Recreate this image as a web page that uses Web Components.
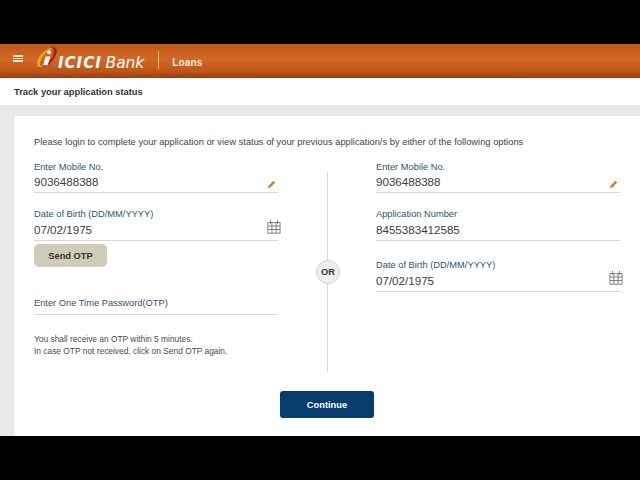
<!DOCTYPE html>
<html>
<head>
<meta charset="utf-8">
<title>Track your application status</title>
<style>
  html, body { margin: 0; padding: 0; background: #000; }
  body { width: 640px; height: 480px; overflow: hidden; font-family: "Liberation Sans", Arial, sans-serif; }
  bank-header { margin-top: 44px; }
  #page { background: #e9e9e9; padding-top: 11px; height: 331px; box-sizing: border-box; overflow: hidden; }
</style>
</head>
<body>
<template id="bank-header-tpl">
  <style>
    :host { display: flex; align-items: center; height: 34px; box-sizing: border-box; color: #fff;
      background: linear-gradient(#c4561c 0%, #cf6a25 45%, #bf5518 80%, #9c3c10 100%); }
    .menu { width: 10px; height: 3px; margin-left: 13px; margin-top: -6px; border-top: 2px solid #f3e3d3; border-bottom: 2px solid #f3e3d3; position: relative; }
    .menu::after { content: ""; position: absolute; left: 0; right: 0; top: 1px; height: 1px; background: #f3e3d3; }
    svg { margin-left: 13px; margin-top: -5px; flex: none; }
    .brand { font-family: "DejaVu Sans", sans-serif; font-size: 15.5px; font-style: italic; margin-left: -1px; white-space: nowrap; margin-top: 3px; letter-spacing: -0.1px; }
    .brand b { font-weight: 700; font-size: 15px; letter-spacing: 1px; margin-right: -1px; }
    .sep { width: 1px; height: 18px; background: #e9b88e; margin-left: 14px; margin-top: -2px; }
    .product { font-size: 10px; font-weight: 700; margin-left: 13px; margin-top: 3px; color: #f8ece0; letter-spacing: 0.2px; }
  </style>
  <div class="menu"></div>
  <svg width="23" height="26" viewBox="0 0 22 24">
    <path d="M14.500 1.500C8 3 1.500 10 1 16c-.3 3.500 2.500 4.500 5.500 3.200C3.500 19 3 16.500 4.500 13 6.300 8.800 10.500 4 15.500 2.200z" fill="#f4a21e"/>
    <path d="M14 1c4-1 6.500.5 6 4-.8 5.500-6 12.500-12 14.500l-1.500-.3c5-2.500 9.500-9 10.500-13.700.6-2.500-.5-4-3-4.500z" fill="#a8260f"/>
    <circle cx="12.500" cy="5.500" r="1.900" fill="#fff"/>
    <path d="M9.200 9.500h4.600l-2.800 8.500H7z" fill="#fff"/>
  </svg>
  <span class="brand"><b>ICICI</b> Bank</span>
  <span class="sep"></span>
  <span class="product"><slot></slot></span>
</template>

<template id="page-title-tpl">
  <style>
    :host { display: flex; align-items: center; height: 27px; padding-left: 14px; background: #fff;
      font-size: 9.300px; font-weight: 700; color: #333; }
  </style>
  <slot></slot>
</template>

<template id="form-field-tpl">
  <style>
    :host { display: block; border-bottom: 1px solid #d8d8d8; position: relative; margin-bottom: 15px; }
    :host([tall]) .value { margin-top: 2px; padding-bottom: 3px; }
    :host([empty]) .value { display: none; }
    :host([empty]) .label { padding-bottom: 5px; }
    .label { font-size: 9.300px; line-height: 12px; color: #2f5370; }
    .value { font-size: 11.600px; line-height: 15px; height: 15px; margin-top: 1px; padding-bottom: 3px; color: #3c3c3c; }
    ::slotted(svg) { position: absolute; }
  </style>
  <div class="label"></div>
  <div class="value"></div>
  <slot></slot>
</template>

<template id="or-divider-tpl">
  <style>
    :host { display: block; position: relative; width: 1px; height: 200px; margin: 11px 0 0 1px; background: #d9d9d9; }
    .badge { position: absolute; top: 88px; left: -11px; width: 24px; height: 24px; border-radius: 50%; box-sizing: border-box;
      background: #eee; border: 1px solid #d4d4d4; display: flex; align-items: center; justify-content: center;
      font-size: 9.300px; font-weight: 700; color: #333; }
  </style>
  <span class="badge">OR</span>
</template>

<template id="app-button-tpl">
  <style>
    :host { display: inline-flex; align-items: center; justify-content: center; box-sizing: border-box; font-size: 9.300px; font-weight: 700; }
    :host([variant="otp"]) { width: 73px; height: 23px; border-radius: 5px; background: #d0ccb8; color: #333; }
    :host([variant="primary"]) { width: 94px; height: 27px; border-radius: 3px; background: #063c70; color: #fff; }
  </style>
  <slot></slot>
</template>

<template id="login-card-tpl">
  <style>
    :host { display: block; margin-left: 14px; background: #fff; height: 320px; padding: 20px 0 0 19px; box-sizing: border-box; border-left: 1px solid #f4f4f4; }
    .intro { font-size: 9.300px; line-height: 12px; color: #444; margin-bottom: 13px; letter-spacing: 0.02px; white-space: nowrap; }
    .cols { display: grid; grid-template-columns: 244px 2px 244px; column-gap: 48px; height: 211px; }
    .foot { display: flex; justify-content: center; width: 586px; margin-top: 19px; }
  </style>
  <div class="intro"><slot name="intro"></slot></div>
  <div class="cols">
    <slot name="left"></slot>
    <or-divider></or-divider>
    <slot name="right"></slot>
  </div>
  <div class="foot"><slot name="action"></slot></div>
</template>

<template id="form-col-tpl">
  <style>
    :host { display: flex; flex-direction: column; align-items: stretch; }
    ::slotted(app-button) { align-self: flex-start; margin-top: -12px; margin-bottom: 30px; }
    ::slotted(p) { margin: 0; font-size: 8.400px; line-height: 11.500px; color: #4a4a4a; white-space: nowrap; }
  </style>
  <slot></slot>
</template>

<bank-header>Loans</bank-header>
<page-title>Track your application status</page-title>
<div id="page">
  <login-card>
    <span slot="intro">Please login to complete your application or view status of your previous application/s by either of the following options</span>
    <form-col slot="left">
      <form-field label="Enter Mobile No." value="9036488388"><svg width="9" height="9" viewBox="0 0 9 9" style="right:2px;bottom:3px"><path d="M1 8l.5-2.300L6.500.8 8.200 2.500 3.300 7.500z" fill="#d97a2a"/></svg></form-field>
      <form-field tall label="Date of Birth (DD/MM/YYYY)" value="07/02/1975"><svg width="14" height="15" viewBox="0 0 14 15" style="right:-3px;bottom:6px" fill="none" stroke="#666" stroke-width=".8"><path d="M.9 3.500h12.200v10.700H.9zM.9 7h12.200M.9 10.500h12.200M4.900 3.500v10.700M9.100 3.500v10.700M3.500 .8v4M10.500 .8v4"/></svg></form-field>
      <app-button variant="otp">Send OTP</app-button>
      <form-field empty label="Enter One Time Password(OTP)" style="margin-bottom:19px"></form-field>
      <p>You shall receive an OTP within 5 minutes.<br>In case OTP not received, click on Send OTP again.</p>
    </form-col>
    <form-col slot="right">
      <form-field label="Enter Mobile No." value="9036488388"><svg width="9" height="9" viewBox="0 0 9 9" style="right:2px;bottom:3px"><path d="M1 8l.5-2.300L6.500.8 8.200 2.500 3.300 7.500z" fill="#d97a2a"/></svg></form-field>
      <form-field tall label="Application Number" value="8455383412585" style="margin-bottom:18px"></form-field>
      <form-field tall label="Date of Birth (DD/MM/YYYY)" value="07/02/1975"><svg width="14" height="15" viewBox="0 0 14 15" style="right:-3px;bottom:6px" fill="none" stroke="#666" stroke-width=".8"><path d="M.9 3.500h12.200v10.700H.9zM.9 7h12.200M.9 10.500h12.200M4.900 3.500v10.700M9.100 3.500v10.700M3.500 .8v4M10.500 .8v4"/></svg></form-field>
    </form-col>
    <app-button slot="action" variant="primary">Continue</app-button>
  </login-card>
</div>
<script>
  // plain elements: just stamp the template into an open shadow root
  function plain(tag, tplId) {
    customElements.define(tag, class extends HTMLElement {
      constructor() {
        super();
        this.attachShadow({ mode: 'open' });
        this.shadowRoot.appendChild(document.getElementById(tplId).content.cloneNode(true));
      }
    });
  }
  plain('bank-header', 'bank-header-tpl');
  plain('page-title', 'page-title-tpl');
  plain('or-divider', 'or-divider-tpl');
  plain('app-button', 'app-button-tpl');
  plain('login-card', 'login-card-tpl');
  plain('form-col', 'form-col-tpl');

  class FormField extends HTMLElement {
    constructor() {
      super();
      this.attachShadow({ mode: 'open' });
      this.shadowRoot.appendChild(document.getElementById('form-field-tpl').content.cloneNode(true));
    }
    connectedCallback() {
      this.shadowRoot.querySelector('.label').textContent = this.getAttribute('label') || '';
      this.shadowRoot.querySelector('.value').textContent = this.getAttribute('value') || '';
    }
  }
  customElements.define('form-field', FormField);
</script>
</body>
</html>
